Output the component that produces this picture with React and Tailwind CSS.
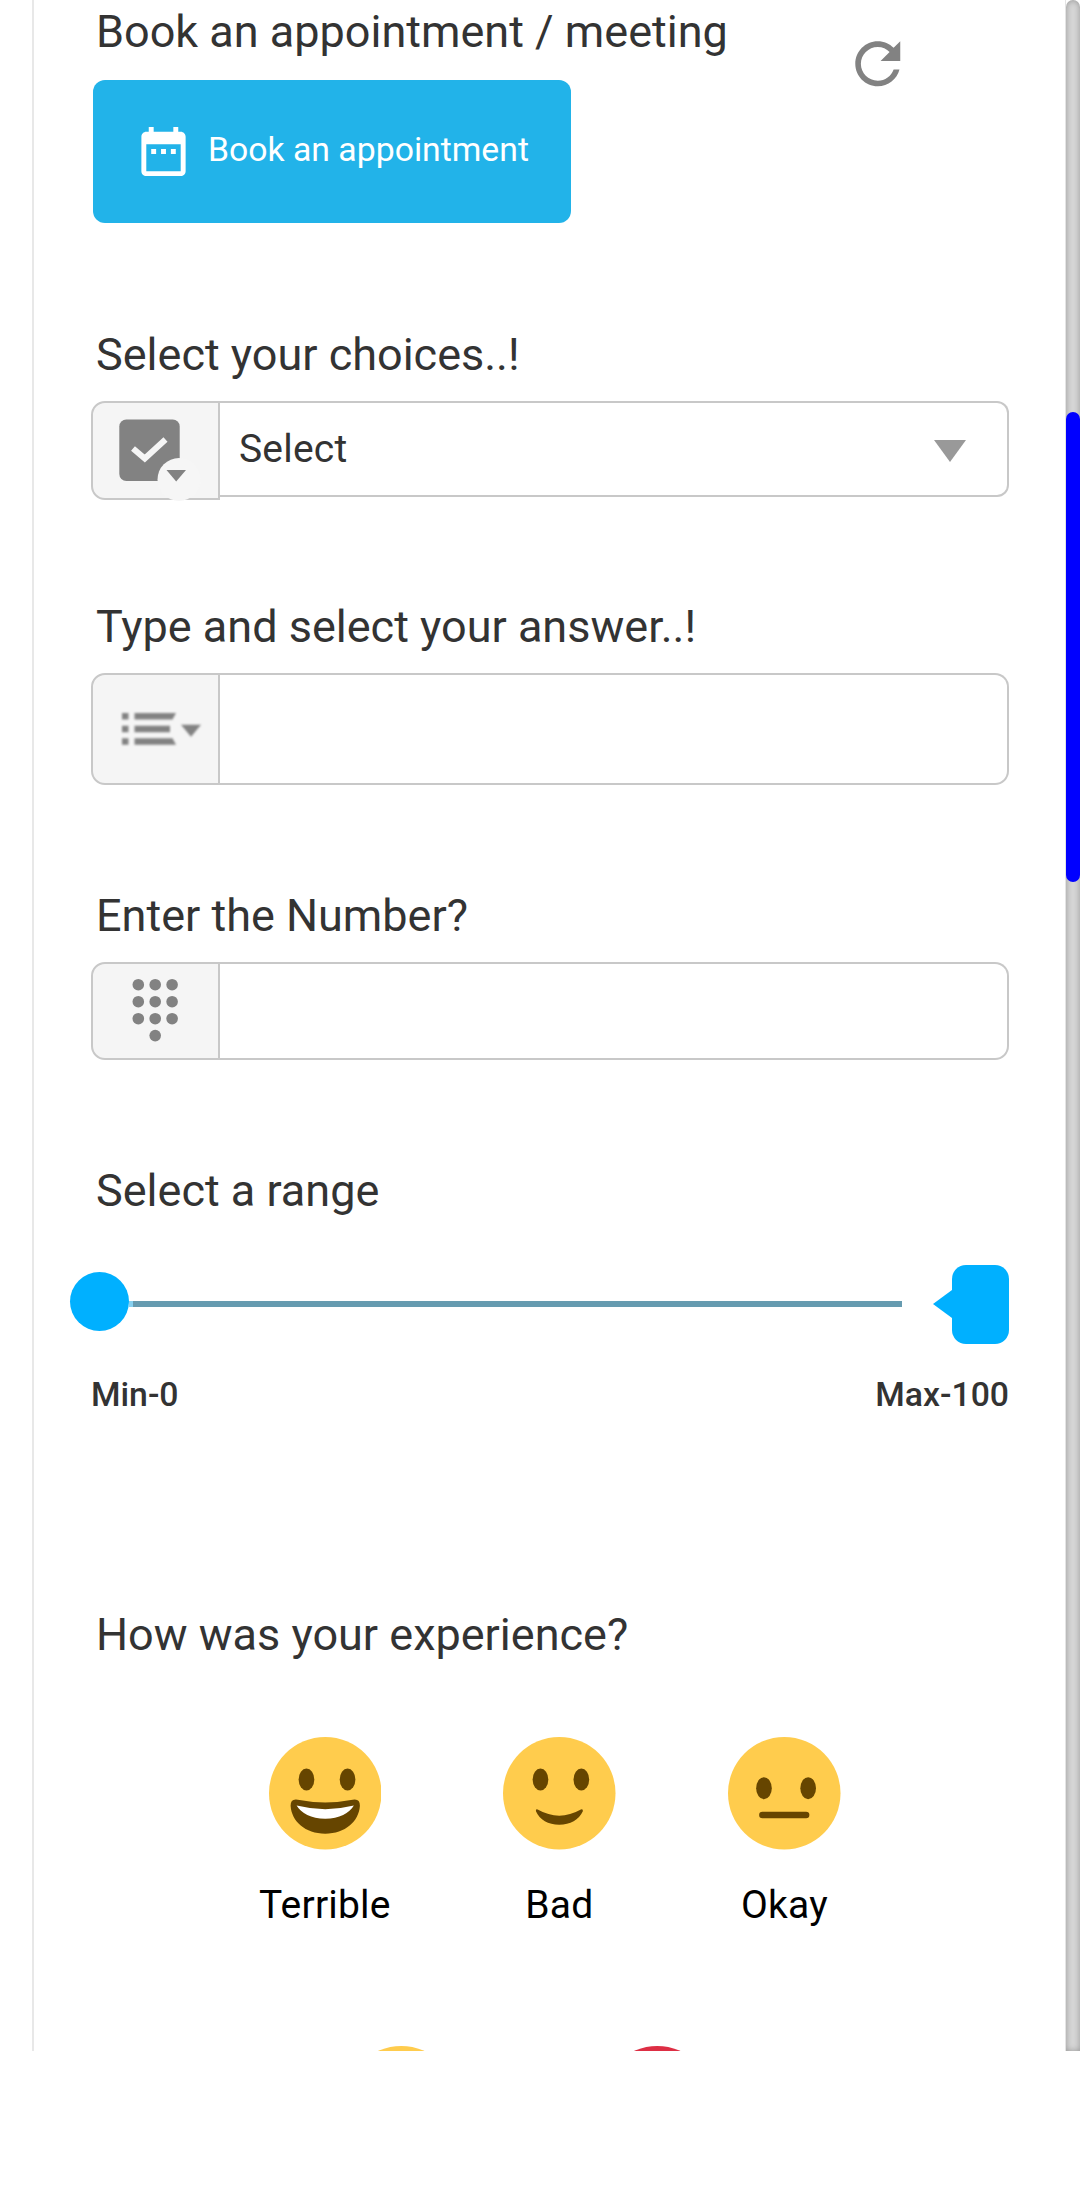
import React from "react";

function Label({ children }) {
  return (
    <h2 className="pl-[5px] h-[60px] leading-[60px] text-[45px] font-normal whitespace-nowrap text-[#333333]">
      {children}
    </h2>
  );
}

function Addon({ children, className = "" }) {
  return (
    <div
      className={`flex w-[129px] shrink-0 rounded-l-[14px] border-2 border-[#c8c8c8] bg-[#f5f5f5] ${className}`}
    >
      {children}
    </div>
  );
}

function CheckSelectIcon() {
  return (
    <svg className="block overflow-visible blur-[0.6px]" width="125" height="95" viewBox="93 403 125 95">
      <rect x="119.3" y="419.5" width="60.4" height="61.5" rx="7" fill="#828282" />
      <path d="M133 448.5 L144.8 458.5 L165.5 439.5" fill="none" stroke="#f5f5f5" strokeWidth="6" />
      <circle cx="179" cy="479.5" r="21.5" fill="#f6f6f6" />
      <path d="M166.5 470h19.5l-9.8 11.5z" fill="#828282" />
    </svg>
  );
}

function ListSelectIcon() {
  return (
    <svg className="block blur-[0.8px]" width="125" height="108" viewBox="93 675 125 108">
      <g fill="#828282">
        <path d="M122 713h6.5v6.5h-6.5zM122 725.7h6.5v6.5h-6.5zM122 738.300h6.5v6.5h-6.5z" />
        <path d="M134.5 713h41.5l-3.5 6.5h-38zM134.5 725.7h35.5v6.5h-35.5zM134.5 738.300h38l3.5 6.5h-41.5z" />
        <path d="M181 724.7h20l-10 12z" />
      </g>
    </svg>
  );
}

const DOTS = [
  [138.3, 984.7], [155.2, 984.7], [172.1, 984.7],
  [138.3, 1001.7], [155.2, 1001.7], [172.1, 1001.7],
  [138.3, 1018.7], [155.2, 1018.7], [172.1, 1018.7],
  [155.2, 1035.6],
];

function KeypadIcon() {
  return (
    <svg className="block" width="125" height="94" viewBox="93 964 125 94">
      {DOTS.map(([x, y]) => (
        <circle key={`${x}-${y}`} cx={x} cy={y} r="5.8" fill="#828282" />
      ))}
    </svg>
  );
}

function Face({ kind }) {
  return (
    <svg className="block" width="112.5" height="112.5" viewBox="0 0 112 112">
      <circle cx="56" cy="56" r="56" fill={kind === "red" ? "#dd2e44" : "#ffcc4d"} />
      {kind === "grin" && (
        <g>
          <g fill="#664500">
            <ellipse cx="37.3" cy="42.3" rx="7.8" ry="11" />
            <ellipse cx="78.2" cy="42.3" rx="7.8" ry="11" />
            <path d="M27 62.3 Q56 68 85 62.3 Q90.5 62 90.5 68.5 C89.5 84 76 96.3 56 96.3 C36 96.3 22.5 84 21.5 68.5 Q21.5 62 27 62.3Z" />
          </g>
          <path d="M27.5 68.3 Q56 75.5 84.5 68.3 C80 76 70 81.5 56 81.5 C42 81.5 32 76 27.5 68.3Z" fill="#ffffff" />
        </g>
      )}
      {kind === "smile" && (
        <g fill="#664500">
          <ellipse cx="37.3" cy="42.3" rx="7.8" ry="11" />
          <ellipse cx="78" cy="42.3" rx="7.8" ry="11" />
          <path d="M34.5 72.2 Q56 84.4 77.5 72.2 Q79.9 71.5 79.5 74 C75.5 82.5 67 87.3 56 87.3 C45 87.3 36.5 82.5 32.8 74 Q32.3 71.5 34.5 72.2Z" />
        </g>
      )}
      {kind === "neutral" && (
        <g fill="#664500">
          <ellipse cx="35.8" cy="51" rx="7.8" ry="11" />
          <ellipse cx="79.8" cy="51" rx="7.8" ry="11" />
          <rect x="31" y="74.3" width="50" height="6.6" rx="3.3" />
        </g>
      )}
    </svg>
  );
}

function Rating({ kind, label }) {
  return (
    <div className="flex flex-col items-center">
      <Face kind={kind} />
      <span className="mt-[28.5px] h-[54px] leading-[54px] text-[39px] tracking-[0.2px] text-black">{label}</span>
    </div>
  );
}

export default function App() {
  return (
    <div className="h-[2208px] w-[1080px] overflow-hidden bg-white font-['Roboto',sans-serif]">
      <div className="flex h-[2051px] overflow-hidden">
        <main className="ml-[32px] flex-1 border-l-2 border-[#e8e8e8] pl-[57px] pt-[2px]">
          <section className="flex h-[323px]">
            <div>
              <Label>Book an appointment / meeting</Label>
              <button className="ml-[2px] mt-[18px] flex h-[143px] w-[478px] items-center rounded-[12px] bg-[#22b3e9] pl-[41px] text-white">
                <svg className="shrink-0" width="59" height="59" viewBox="0 0 24 24" fill="currentColor">
                  <path d="M9 11H7v2h2v-2zm4 0h-2v2h2v-2zm4 0h-2v2h2v-2zm2-7h-1V2h-2v2H8V2H6v2H5c-1.11 0-1.99.9-1.99 2L3 20c0 1.1.89 2 2 2h14c1.1 0 2-.9 2-2V6c0-1.1-.9-2-2-2zm0 16H5V9h14v11z" />
                </svg>
                <span className="-mt-[3px] ml-[15px] whitespace-nowrap text-[33.75px] leading-[40px]">Book an appointment</span>
              </button>
            </div>
            <svg className="ml-auto mr-[153.5px] mt-[27.5px] shrink-0" width="67.5" height="67.5" viewBox="0 0 24 24" fill="#828282">
              <path d="M17.65 6.35C16.2 4.9 14.21 4 12 4c-4.42 0-7.99 3.58-7.99 8s3.57 8 7.99 8c3.73 0 6.84-2.55 7.73-6h-2.08c-.82 2.33-3.04 4-5.65 4-3.31 0-6-2.69-6-6s2.69-6 6-6c1.66 0 3.14.69 4.22 1.78L13 11h7V4l-2.35 2.35z" />
            </svg>
          </section>

          <section className="h-[272px]">
            <Label>Select your choices..!</Label>
            <div className="mt-[16px] flex w-[918px] items-start">
              <Addon className="h-[99px]">
                <CheckSelectIcon />
              </Addon>
              <div className="flex h-[96px] flex-1 items-center justify-between rounded-r-[12px] border-2 border-l-0 border-[#c8c8c8] pl-[19px] pr-[41px]">
                <span className="text-[39px] leading-[50px] tracking-[0.2px] text-[#333333]">Select</span>
                <svg className="mt-[3px]" width="32" height="22" viewBox="0 0 32 22">
                  <path d="M0 0h32L16 22z" fill="#999999" />
                </svg>
              </div>
            </div>
          </section>

          <section className="h-[289px]">
            <Label>Type and select your answer..!</Label>
            <div className="mt-[16px] flex h-[112px] w-[918px]">
              <Addon>
                <ListSelectIcon />
              </Addon>
              <div className="flex-1 rounded-r-[14px] border-2 border-l-0 border-[#c8c8c8]" />
            </div>
          </section>

          <section className="h-[275px]">
            <Label>Enter the Number?</Label>
            <div className="mt-[16px] flex h-[98px] w-[918px]">
              <Addon>
                <KeypadIcon />
              </Addon>
              <div className="flex-1 rounded-r-[14px] border-2 border-l-0 border-[#c8c8c8]" />
            </div>
          </section>

          <section className="h-[444px]">
            <Label>Select a range</Label>
            <div className="-ml-[21px] mt-[44px] flex h-[79px] w-[939px] items-center">
              <div className="-mt-[7px] size-[59px] shrink-0 rounded-full bg-[#00b0ff]" />
              <div className="-mt-px h-[6px] w-[4px] bg-[#86d0f0]" />
              <div className="-mt-px h-[6px] w-[769px] bg-[#669bb0]" />
              <svg className="-mt-px ml-auto block" width="19" height="28" viewBox="0 0 19 28">
                <path d="M19 0v28L0 14z" fill="#00b0ff" />
              </svg>
              <div className="h-[79px] w-[57px] rounded-[14px] bg-[#00b0ff]" />
            </div>
            <div className="mt-[29px] flex h-[44px] w-[918px] justify-between text-[33.75px] font-medium leading-[44px] text-[#333333]">
              <span>Min-0</span>
              <span>Max-100</span>
            </div>
          </section>

          <section>
            <Label>How was your experience?</Label>
            <div className="mt-[72px] flex w-[918px] gap-[112.5px] pl-[168px]">
              <Rating kind="grin" label="Terrible" />
              <Rating kind="smile" label="Bad" />
              <Rating kind="neutral" label="Okay" />
            </div>
            <div className="mt-[114px] flex gap-[143px] pl-[254px]">
              <Face kind="plain" />
              <Face kind="red" />
            </div>
          </section>
        </main>

        <div className="w-[15px] shrink-0 border-l border-[#e4e4e4]">
          <div className="h-full rounded-t-[7px] bg-[#d6d6d6] pt-[412px] shadow-[inset_0_0_6px_rgba(0,0,0,0.3)]">
            <div className="h-[470px] rounded-[7px] bg-[#0000ff]" />
          </div>
        </div>
      </div>
    </div>
  );
}
